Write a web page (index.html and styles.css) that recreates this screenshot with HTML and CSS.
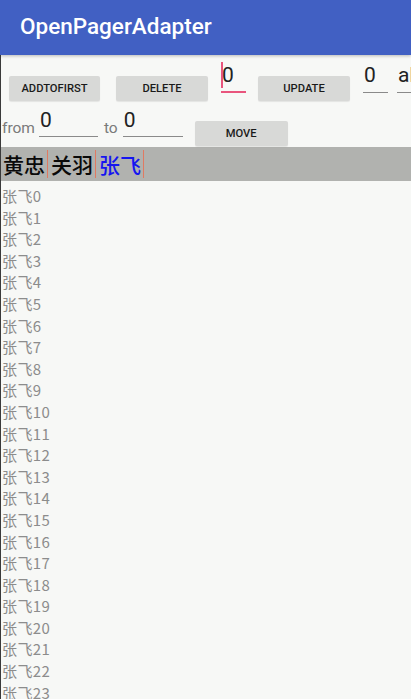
FILE: index.html
```html
<!DOCTYPE html>
<html>
<head>
<meta charset="utf-8">
<link rel="stylesheet" href="styles.css">
</head>
<body>
<div class="screen">
  <header class="appbar"><span class="title">OpenPagerAdapter</span></header>
  <div class="row row1">
    <div class="btn b-add">ADDTOFIRST</div>
    <div class="btn b-del">DELETE</div>
    <div class="edit e1 focused"><span class="cursor"></span>0</div>
    <div class="btn b-upd">UPDATE</div>
    <div class="edit e2">0</div>
    <div class="edit e3">ab</div>
  </div>
  <div class="row row2">
    <span class="label l-from">from</span>
    <div class="edit e4">0</div>
    <span class="label l-to">to</span>
    <div class="edit e5">0</div>
    <div class="btn b-move">MOVE</div>
  </div>
  <div class="tabs">
    <div class="tab">黄忠</div>
    <div class="tab">关羽</div>
    <div class="tab active">张飞</div>
  </div>
  <ul class="list">
    <li>张飞0</li><li>张飞1</li><li>张飞2</li><li>张飞3</li><li>张飞4</li>
    <li>张飞5</li><li>张飞6</li><li>张飞7</li><li>张飞8</li><li>张飞9</li>
    <li>张飞10</li><li>张飞11</li><li>张飞12</li><li>张飞13</li><li>张飞14</li>
    <li>张飞15</li><li>张飞16</li><li>张飞17</li><li>张飞18</li><li>张飞19</li>
    <li>张飞20</li><li>张飞21</li><li>张飞22</li><li>张飞23</li><li>张飞24</li>
  </ul>
</div>
</body>
</html>
```
FILE: styles.css
```css
html, body {
  margin: 0;
  padding: 0;
  background: #f7f8f6;
}
.screen {
  position: relative;
  width: 411px;
  height: 699px;
  overflow: hidden;
  background: #f7f8f6;
  font-family: Roboto, "Noto Sans CJK SC", sans-serif;
}
.screen::after {
  content: "";
  position: absolute;
  left: 0;
  top: 0;
  width: 1px;
  height: 699px;
  background: #3a3a3a;
}
.appbar {
  height: 55px;
  background: #4160c3;
  box-shadow: 0 1px 3px rgba(0,0,0,0.25);
  display: flex;
  align-items: center;
  padding-left: 20px;
  position: relative;
  z-index: 1;
}
.title {
  color: #fff;
  font-family: Roboto, sans-serif;
  font-weight: 500;
  font-size: 22.5px;
  margin-top: -4px;
}
.row {
  display: flex;
  align-items: flex-start;
  white-space: nowrap;
}
.row1 {
  height: 50px;
  padding-left: 9px;
}
.btn {
  box-sizing: border-box;
  height: 25px;
  background: #d8d9d7;
  border-radius: 2px;
  box-shadow: 0 1px 1px rgba(0,0,0,0.08);
  display: flex;
  align-items: center;
  justify-content: center;
  font-family: Roboto, sans-serif;
  font-weight: 500;
  font-size: 11.2px;
  color: #1a1a1a;
  flex-shrink: 0;
}
.b-add { width: 91px; margin-top: 21px; }
.b-del { width: 92px; margin-top: 21px; margin-left: 16px; }
.b-upd { width: 92px; margin-top: 21px; margin-left: 12px; }
.b-move { width: 93px; margin-top: 16px; margin-left: 12px; }
.edit {
  position: relative;
  box-sizing: border-box;
  height: 33px;
  border-bottom: 1px solid #8a8a8a;
  font-family: Roboto, sans-serif;
  font-size: 21px;
  line-height: 26px;
  color: #222;
  padding-left: 1px;
  padding-top: 2px;
  flex-shrink: 0;
}
.e1 { width: 25px; margin-left: 13px; margin-top: 5px; border-bottom: 2px solid #e9557d; height: 33px; }
.e2 { width: 25px; margin-left: 13px; margin-top: 5px; }
.e3 { width: 40px; margin-left: 9px; margin-top: 5px; }
.cursor {
  position: absolute;
  left: 0;
  top: 2px;
  width: 2px;
  height: 26px;
  background: #e9557d;
}
.row2 {
  height: 42px;
}
.label {
  font-family: Roboto, sans-serif;
  font-size: 15.5px;
  color: #7a7a7a;
  margin-top: 14px;
}
.l-from { margin-left: 2px; }
.l-to { margin-left: 6px; }
.e4 { width: 59px; margin-left: 4px; margin-top: 0; height: 32px; }
.e5 { width: 60px; margin-left: 5px; margin-top: 0; height: 32px; }
.tabs {
  height: 34px;
  background: #b1b2af;
  display: flex;
  align-items: stretch;
}
.tab {
  box-sizing: border-box;
  padding: 0 2px 0 3px;
  margin: 3px 0;
  border-right: 1px solid #e07a62;
  font-family: "Noto Sans CJK SC", sans-serif;
  font-weight: 500;
  font-size: 21px;
  line-height: 28px;
  color: #0a0a0a;
}
.tab.active { color: #1515f0; }
.list {
  list-style: none;
  margin: 0;
  padding: 4px 0 0 2px;
}
.list li {
  font-family: "Noto Sans CJK SC", sans-serif;
  font-size: 15px;
  letter-spacing: 0.4px;
  line-height: 21.6px;
  height: 21.6px;
  color: #8c8c8c;
}
```
